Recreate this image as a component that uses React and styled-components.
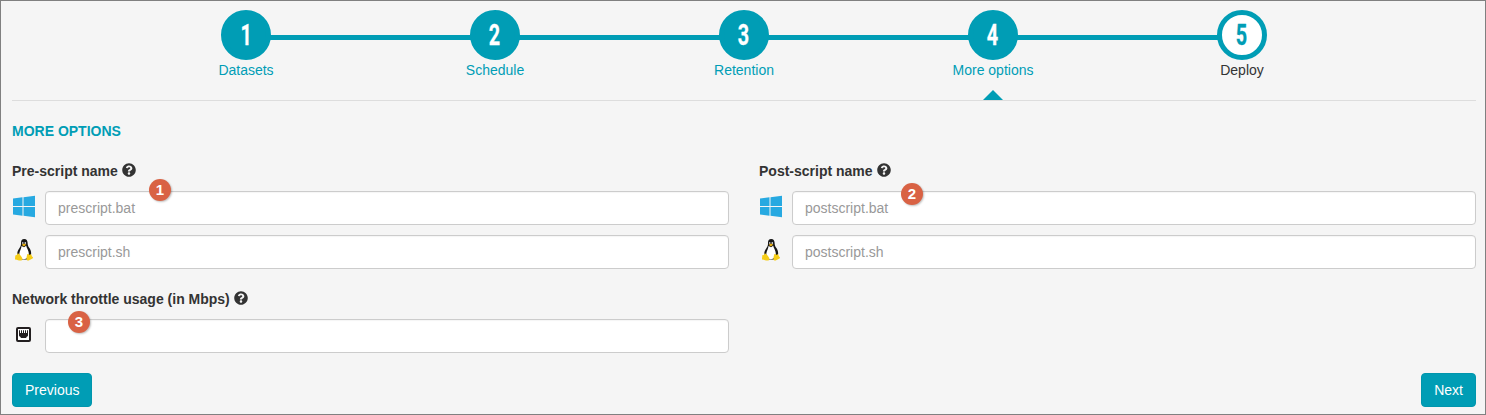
import React from 'react';
import styled, { createGlobalStyle } from 'styled-components';
import { FaQuestionCircle } from 'react-icons/fa';

const teal = '#009db5';

const GlobalStyle = createGlobalStyle`
  *, *::before, *::after { box-sizing: border-box; }
  body {
    margin: 0;
    background: #f5f5f5;
    color: #333;
    font: 14px/20px "Liberation Sans", Arial, sans-serif;
  }
`;

const Frame = styled.main`
  height: 415px;
  padding: 9px 9px 0 11px;
  border: 1px solid #808080;
  overflow: hidden;
`;

const Steps = styled.ol`
  display: grid;
  grid-template-columns: repeat(5, 249px);
  height: 91px;
  margin: 0;
  padding: 0 0 0 109px;
  list-style: none;
  border-bottom: 1px solid #ddd;
`;

const StepItem = styled.li`
  position: relative;
  display: flex;
  flex-direction: column;
  align-items: center;
  color: ${(p) => (p.$last ? '#333' : teal)};

  &::before {
    content: '';
    display: ${(p) => (p.$last ? 'none' : 'block')};
    position: absolute;
    top: 25px;
    left: 50%;
    width: 100%;
    height: 5px;
    background: ${teal};
  }

  &::after {
    content: '';
    display: ${(p) => (p.$active ? 'block' : 'none')};
    position: absolute;
    bottom: 0;
    border: 10px solid transparent;
    border-top: 0;
    border-bottom-color: ${teal};
  }
`;

const StepCircle = styled.span`
  position: relative;
  z-index: 1;
  display: flex;
  align-items: center;
  justify-content: center;
  width: 50px;
  height: 50px;
  border: 5px solid ${teal};
  border-radius: 50%;
  background: ${(p) => (p.$last ? '#fff' : teal)};
  color: ${(p) => (p.$last ? teal : '#fff')};
`;

const StepNumber = styled.span`
  padding-left: ${(p) => (p.$narrow ? 3 : 1)}px;
  font: bold 30px/40px Roboto, sans-serif;
  -webkit-text-stroke: 0.3px currentColor;
  transform: scaleX(0.66);
`;

const StepName = styled.span`
  padding-left: 1px;
`;

const Heading = styled.h1`
  margin: 20px 0;
  color: ${teal};
  font-size: 14px;
  line-height: 20px;
  font-weight: bold;
  text-transform: uppercase;
`;

const Columns = styled.div`
  display: grid;
  grid-template-columns: 1fr 1fr;
  column-gap: 30px;
  row-gap: 20px;
`;

const Label = styled.label`
  display: flex;
  align-items: center;
  gap: 4px;
  margin-bottom: 10px;
  font-weight: bold;

  svg { margin-top: -2px; }
`;

const FieldRow = styled.div`
  position: relative;
  display: grid;
  grid-template-columns: 33px 1fr;
  height: 34px;

  & + & { margin-top: 10px; }
`;

const IconCell = styled.span`
  display: flex;
  align-items: center;
  width: 23px;
  height: 30px;
  justify-content: center;
`;

const Input = styled.input`
  width: 100%;
  height: 34px;
  padding: 6px 12px;
  border: 1px solid #ccc;
  border-radius: 4px;
  background: #fff;
  box-shadow: inset 0 1px 1px rgba(0, 0, 0, 0.04);
  color: #555;
  font: inherit;

  &::placeholder { color: #999; opacity: 1; }
`;

const Marker = styled.span`
  position: absolute;
  left: ${(p) => p.$x}px;
  top: ${(p) => p.$y}px;
  width: 22px;
  height: 22px;
  border-radius: 50%;
  background: #d96244;
  box-shadow: 1px 1px 2px rgba(0, 0, 0, 0.25);
  color: #fff;
  font-size: 15px;
  font-weight: bold;
  line-height: 22px;
  text-align: center;
`;

const Actions = styled.div`
  display: flex;
  justify-content: space-between;
  margin-top: 20px;
`;

const Button = styled.button`
  height: 34px;
  padding: 6px 12px;
  border: 1px solid #0096ad;
  border-radius: 4px;
  background: ${teal};
  color: #fff;
  font: inherit;
`;

const WindowsIcon = () => (
  <svg width="22" height="24" viewBox="0 -2 22 24" fill="#27a9e1">
    <path d="M0 2.600 9.500 1.300V10H0ZM10.500 1.200 22 -.2V10H10.500ZM0 11H9.500V19.800L0 18.600ZM10.500 11H22V21.200L10.500 19.800Z" />
  </svg>
);

const LinuxIcon = () => (
  <svg width="18" height="22" viewBox="0 0 18 22">
    <path d="M9.200 0C6.800 0 5.900 1.700 6 4c.1 2.500-.6 3.600-1.800 5.500C2.800 11.500 2 13.500 2.400 16L7 20.500h5.500L16 16c.5-2.800-.3-5.300-2-7.500-1-1.500-1.300-2.700-1.400-4.800C12.400 1.500 11.600 0 9.200 0Z" fill="#161616" />
    <path d="M6.500 7 9 8.300l2.200-1.500c.4 2.500 2.500 4.500 2.600 7.500.1 3.600-2 5.900-4.800 5.900-3 0-4.900-2.400-4.700-5.500.2-2.700 2.100-4.900 2.200-7.700Z" fill="#fff" />
    <ellipse cx="7.800" cy="4" rx=".7" ry="1" fill="#ddd" />
    <ellipse cx="10.300" cy="4" rx=".8" ry="1" fill="#ddd" />
    <path d="m6.700 5.800 2.300-1.200L11.300 5.800 8.800 7.500Z" fill="#e5ae12" />
    <path d="M2.600 14.500c1.200-.4 2.200.8 3.100 2.200 1 1.500 2.400 2.800 1.500 4.100-1.100 1.600-3.200.4-4.900.1-1.200-.2-2.500-.2-2.300-1.400 0-.9.400-1.500.2-2.500-.1-1.200 1.400-.5 1.900-1.300.2-.4 0-1 .5-1.200ZM12.300 15.300c.8-.7 1.200.5 2.200.4 1 0 1-.9 1.700-.3.600.5.300 1.400.9 2.100.6.600 1.400 1 .7 1.700-.9.900-2.400 1.100-3.300 1.900-1 .9-2.900.6-3.100-.8-.1-1.700.6-3.500.9-5Z" fill="#f5cd18" />
  </svg>
);

const EthernetIcon = () => (
  <svg width="15" height="15" viewBox="0 0 15 15">
    <rect x="1" y="1" width="13" height="13" rx="1" fill="#fff" stroke="#231f20" strokeWidth="2" />
    <path d="M3 3.200H12V8.500Q12 9.500 10.800 9.700L10 11H5L4.200 9.700Q3 9.500 3 8.500Z" fill="#231f20" />
    <path d="M2.500 2.500V12.500H12.500V2.500" fill="none" stroke="#fff" />
    <path d="M4.500 3V6M6.500 3V6M8.500 3V6M10.500 3V6" stroke="#fff" />
  </svg>
);

const steps = ['Datasets', 'Schedule', 'Retention', 'More options', 'Deploy'];

function Field({ icon, placeholder, marker }) {
  return (
    <FieldRow>
      <IconCell>{icon}</IconCell>
      <Input type="text" placeholder={placeholder} />
      {marker && <Marker $x={marker.x} $y={marker.y}>{marker.text}</Marker>}
    </FieldRow>
  );
}

export default function App() {
  return (
    <Frame>
      <GlobalStyle />
      <Steps>
        {steps.map((name, i) => (
          <StepItem key={name} $last={i === 4} $active={i === 3}>
            <StepCircle $last={i === 4}>
              <StepNumber $narrow={i === 0}>{i + 1}</StepNumber>
            </StepCircle>
            <StepName>{name}</StepName>
          </StepItem>
        ))}
      </Steps>
      <Heading>More options</Heading>
      <Columns>
        <section>
          <Label>Pre-script name <FaQuestionCircle size={14} /></Label>
          <Field icon={<WindowsIcon />} placeholder="prescript.bat" marker={{ text: 1, x: 137, y: -12 }} />
          <Field icon={<LinuxIcon />} placeholder="prescript.sh" />
        </section>
        <section>
          <Label>Post-script name <FaQuestionCircle size={14} /></Label>
          <Field icon={<WindowsIcon />} placeholder="postscript.bat" marker={{ text: 2, x: 142, y: -8 }} />
          <Field icon={<LinuxIcon />} placeholder="postscript.sh" />
        </section>
        <section>
          <Label>Network throttle usage (in Mbps) <FaQuestionCircle size={14} /></Label>
          <Field icon={<EthernetIcon />} marker={{ text: 3, x: 56, y: -8 }} />
        </section>
      </Columns>
      <Actions>
        <Button>Previous</Button>
        <Button>Next</Button>
      </Actions>
    </Frame>
  );
}
